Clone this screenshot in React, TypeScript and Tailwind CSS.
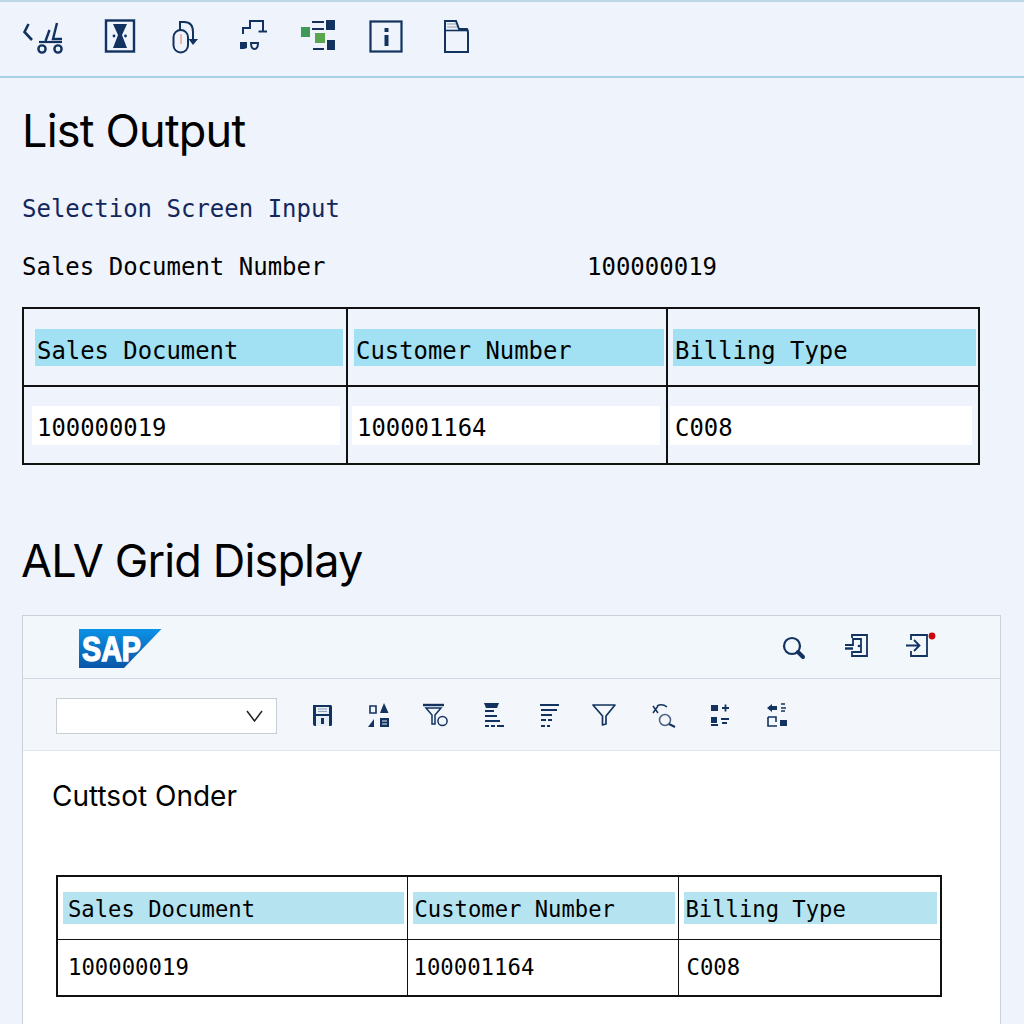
import React from "react";

const N = "#12325f";

function Ico({ x, y, w, h, className, children }: { x: number; y: number; w: number; h: number; className?: string; children: React.ReactNode }) {
  return (
    <svg viewBox={`${x} ${y} ${w} ${h}`} width={w} height={h} className={`shrink-0 ${className ?? ""}`} fill="none" stroke={N} strokeWidth={2}>
      {children}
    </svg>
  );
}

const mono = "font-['DejaVu_Sans_Mono',monospace]";
const inter = "font-['Inter',sans-serif]";

function TopIcons() {
  return (
    <div className="flex items-center h-[74px] pl-[20px]">
      <Ico x={20} y={17} w={46} h={44}>
        <path d="M28.5 24 L24.5 32 L32 40" strokeWidth={2.6} />
        <path d="M49.5 30 L45.5 41" strokeWidth={2.4} />
        <path d="M57 23 L53 39 H62" strokeWidth={2.4} />
        <path d="M39 42 H62" strokeWidth={2.2} />
        <circle cx={42} cy={49} r={3.6} strokeWidth={2.4} />
        <circle cx={58} cy={49} r={3.6} strokeWidth={2.4} />
      </Ico>
      <Ico x={104} y={17} w={32} h={44} className="ml-[38px]">
        <rect x={106} y={20.5} width={28} height={31} strokeWidth={2.4} />
        <path d="M113 24 H127 L122 35 L127 48 H113 L118 35 Z" fill={N} stroke="none" />
        <circle cx={114} cy={36} r={1.4} fill={N} stroke="none" />
        <circle cx={125.5} cy={36} r={1.4} fill={N} stroke="none" />
      </Ico>
      <Ico x={172} y={17} w={30} h={44} className="ml-[36px]">
        <rect x={173.5} y={30} width={14.5} height={22.5} rx={7.2} strokeWidth={2} />
        <path d="M181 34 V44" stroke="#d9967f" strokeWidth={1.2} />
        <path d="M180 30 V22 H184 Q193 22 193 32 V40" strokeWidth={2} />
        <path d="M188.5 39 H198 L193 45 Z" fill={N} stroke="none" />
      </Ico>
      <Ico x={238} y={17} w={30} h={44} className="ml-[36px]">
        <path d="M243 34 V28 H250 V21 H263 V32" strokeWidth={2} />
        <path d="M258.5 31.5 H267" strokeWidth={2} />
        <path d="M240 42 H247 V48 L244 49 H240 Z" fill={N} stroke="none" />
        <path d="M251 43 H258 Q258 49 254.5 49 Q251 49 251 43 Z" strokeWidth={2} />
      </Ico>
      <Ico x={300} y={17} w={36} h={44} className="ml-[32px]">
        <rect x={301} y={27} width={9} height={10} fill="#3f9a58" stroke="none" />
        <rect x={315} y={33} width={10} height={10} fill="#5aa64f" stroke="none" />
        <path d="M312 22 H324 M312 29 H324 M313 49 H324" stroke="#16305c" strokeWidth={1.8} />
        <rect x={326} y={20} width={9} height={10} fill={N} stroke="none" />
        <rect x={327} y={40} width={8} height={10} fill={N} stroke="none" />
      </Ico>
      <Ico x={369} y={17} w={34} h={44} className="ml-[33px]">
        <rect x={370.5} y={21.5} width={31} height={30} strokeWidth={2.2} />
        <rect x={384.5} y={35} width={4} height={11} fill={N} stroke="none" />
        <rect x={384.5} y={28} width={4} height={4} fill={N} stroke="none" />
      </Ico>
      <Ico x={443} y={17} w={27} h={44} className="ml-[40px]">
        <path d="M445 31 V21 H456 L459 29 H467 Q468 30 468 33 V52 H445 Z" strokeWidth={2} />
        <path d="M445 30.5 H467" strokeWidth={1.6} />
        <path d="M447 24 H456 M447 27 H457" stroke="#8b97a8" strokeWidth={1.2} />
      </Ico>
    </div>
  );
}

function OutputTable() {
  return (
    <table className={`ml-[22px] mt-[26px] w-[958px] table-fixed border-collapse border-2 border-[#111] text-[23.9px] text-black ${mono}`}>
      <colgroup>
        <col className="w-[324px]" />
        <col className="w-[320px]" />
        <col />
      </colgroup>
      <tbody>
        <tr className="h-[78px]">
          <td className="border-2 border-[#111] p-0 pl-[11px] pr-[3px]"><div className="bg-[#a2e0f3] h-[37px] mt-[1px] leading-[45px] pl-[2px]">Sales Document</div></td>
          <td className="border-2 border-[#111] p-0 pl-[6px] pr-[2px]"><div className="bg-[#a2e0f3] h-[37px] mt-[1px] leading-[45px] pl-[2px]">Customer Number</div></td>
          <td className="border-2 border-[#111] p-0 pl-[5px] pr-[2px]"><div className="bg-[#a2e0f3] h-[37px] mt-[1px] leading-[45px] pl-[2px]">Billing Type</div></td>
        </tr>
        <tr className="h-[78px]">
          <td className="border-2 border-[#111] p-0 pl-[8px] pr-[6px]"><div className="bg-white h-[39px] leading-[44px] pl-[5px]">100000019</div></td>
          <td className="border-2 border-[#111] p-0 pl-[4px] pr-[6px]"><div className="bg-white h-[39px] leading-[44px] pl-[5px]">100001164</div></td>
          <td className="border-2 border-[#111] p-0 pl-[2px] pr-[6px]"><div className="bg-white h-[39px] leading-[44px] pl-[5px]">C008</div></td>
        </tr>
      </tbody>
    </table>
  );
}

function AlvHeader() {
  return (
    <div className="flex items-center h-[63px] bg-[#f2f7fc] border-b border-[#cfd9e6] pl-[56px]">
      <svg viewBox="79 629 83 40" width={83} height={40} className="shrink-0 mt-[4px]">
        <defs>
          <linearGradient id="sapg" x1="0" y1="0" x2="0" y2="1">
            <stop offset="0" stopColor="#0c92e6" />
            <stop offset="1" stopColor="#0a56a8" />
          </linearGradient>
        </defs>
        <polygon points="79,629 161.5,629 124,668 79,668" fill="url(#sapg)" />
        <text x={82} y={661} fontFamily="Liberation Sans, sans-serif" fontWeight={700} fontSize={35} fill="#fff" stroke="#fff" strokeWidth={1.4} textLength={59} lengthAdjust="spacingAndGlyphs">SAP</text>
      </svg>
      <Ico x={780} y={633} w={26} h={28} className="ml-[619px]">
        <circle cx={791} cy={646} r={8} strokeWidth={2.2} />
        <path d="M797 652 L802 657" strokeWidth={4} strokeLinecap="round" />
      </Ico>
      <Ico x={843} y={632} w={26} h={30} className="ml-[37px]">
        <path d="M851 638 V635 H866 V656 H851 V651" strokeWidth={1.8} />
        <path d="M844 645 H852 V639 H860 V652 H852" strokeWidth={1.8} />
        <path d="M844 648.5 H852" strokeWidth={2.4} />
        <circle cx={858} cy={646} r={1.3} fill={N} stroke="none" />
      </Ico>
      <Ico x={904} y={630} w={34} h={34} className="ml-[35px]">
        <path d="M910 640 V635 H926 V656 H910 V651" strokeWidth={1.8} />
        <path d="M905 645.5 H918 M913 640 L918.5 645.5 L913 651" strokeWidth={1.8} />
        <circle cx={931} cy={636} r={3.4} fill="#c8090f" stroke="none" />
      </Ico>
    </div>
  );
}

function AlvToolbar() {
  return (
    <div className="flex items-center h-[72px] bg-[#f3f7fb] border-b border-[#dfe6ee] pl-[33px]">
      <div className="flex items-center justify-end w-[221px] h-[36px] mt-[2px] bg-white border border-[#c8ced4] pr-[13px]">
        <svg viewBox="0 0 17 12" width={17} height={12} fill="none" stroke="#222" strokeWidth={1.5}><path d="M1 1 L8.5 11 L16 1" /></svg>
      </div>
      <Ico x={311} y={700} w={23} h={29} className="ml-[34px]">
        <path d="M313 705 H331 Q332 705 332 707 V725 Q332 726 330 726 H315 Q313 726 313 724 Z" fill={N} stroke="none" />
        <rect x={316} y={707} width={13} height={7} fill="#e8eef5" stroke="none" />
        <rect x={316} y={716} width={13} height={10} fill="#e8eef5" stroke="none" />
        <rect x={321} y={718} width={3} height={6} fill={N} stroke="none" />
        <path d="M318 709 H327 M318 711.5 H327" stroke="#8ca0b8" strokeWidth={1} />
      </Ico>
      <Ico x={367} y={700} w={24} h={29} className="ml-[33px]">
        <path d="M370 706 H376 V713 H370 Z" strokeWidth={1.6} />
        <path d="M384 703 L388.5 713 H380 Z" fill={N} stroke="none" />
        <path d="M368 727 L374 719 V727 Z" fill={N} stroke="none" />
        <rect x={380} y={718} width={9} height={9} fill={N} stroke="none" />
        <path d="M382 721 H387 M382 724 H387" stroke="#e8eef5" strokeWidth={1.2} />
      </Ico>
      <Ico x={422} y={700} w={28} h={29} className="ml-[31px]">
        <path d="M423 705 H444" strokeWidth={2.4} />
        <path d="M426 708 H441 L435 715 V724 H432 V715 Z" strokeWidth={1.5} />
        <circle cx={442.5} cy={721} r={4.6} strokeWidth={1.5} />
      </Ico>
      <Ico x={482} y={700} w={23} h={29} className="ml-[32px]">
        <path d="M484 703 H499 L497 708 H486 Z" fill={N} stroke="none" />
        <path d="M485 711 H494 M485 716 H497 M485 721 H500 M485 726 H489 M491 726 H495 M497 726 H504" strokeWidth={2.2} />
      </Ico>
      <Ico x={539} y={700} w={21} h={29} className="ml-[34px]">
        <path d="M540 705 H559 M541 710 H557 M541 715 H552 M541 720 H546 M548 720 H552 M541 726 H545 M547 726 H550" strokeWidth={2} />
      </Ico>
      <Ico x={591} y={700} w={27} h={29} className="ml-[31px]">
        <path d="M593 705 H615 L606 716 V724 L602.5 725 V716 Z" strokeWidth={1.7} strokeLinejoin="round" />
      </Ico>
      <Ico x={651} y={700} w={26} h={29} className="ml-[33px]">
        <path d="M653 706 L658 713 M658 706 L653 713 M657 706 Q662 703 667 707" strokeWidth={1.5} />
        <circle cx={665} cy={720} r={5.5} stroke="#4a6180" strokeWidth={1.5} />
        <path d="M669 724 L675 727" strokeWidth={2} />
      </Ico>
      <Ico x={710} y={700} w={21} h={29} className="ml-[33px]">
        <rect x={711} y={705} width={7} height={6} fill={N} stroke="none" />
        <path d="M722 708 H729 M725.5 704.5 V711.5" strokeWidth={1.8} />
        <rect x={711} y={717} width={6} height={6} fill={N} stroke="none" />
        <path d="M711 725 H718 M721 719 H729 M722 723 H727" strokeWidth={1.8} />
      </Ico>
      <Ico x={766} y={700} w={22} h={29} className="ml-[35px]">
        <path d="M767 708 L772 704 V706 H777 V710 H772 V712 Z" fill={N} stroke="none" />
        <path d="M781 704 H785 M781 708 H786 M781 711 H785" strokeWidth={1.6} />
        <path d="M768 717 V726 H777 M768 717 H776 V722" strokeWidth={1.6} />
        <rect x={780} y={720} width={7} height={6} fill={N} stroke="none" />
      </Ico>
    </div>
  );
}

function GridTable() {
  return (
    <table className={`ml-[33px] mt-[62px] w-[886px] table-fixed border-collapse border-2 border-[#111] text-[22.2px] text-black ${mono}`}>
      <colgroup>
        <col className="w-[350px]" />
        <col className="w-[271px]" />
        <col />
      </colgroup>
      <tbody>
        <tr className="h-[63px]">
          <td className="border-[1.5px] border-[#111] p-0 pl-[5px] pr-[3px]"><div className="bg-[#b5e4f0] h-[32px] leading-[35px] pl-[5px]">Sales Document</div></td>
          <td className="border-[1.5px] border-[#111] p-0 pl-[5px] pr-[3px]"><div className="bg-[#b5e4f0] h-[32px] leading-[35px] pl-[2px]">Customer Number</div></td>
          <td className="border-[1.5px] border-[#111] p-0 pl-[5px] pr-[3px]"><div className="bg-[#b5e4f0] h-[32px] leading-[35px] pl-[2px]">Billing Type</div></td>
        </tr>
        <tr className="h-[57px] text-[22.3px]">
          <td className="border-[1.5px] border-[#111] p-0 pl-[10px]">100000019</td>
          <td className="border-[1.5px] border-[#111] p-0 pl-[6px]">100001164</td>
          <td className="border-[1.5px] border-[#111] p-0 pl-[8px]">C008</td>
        </tr>
      </tbody>
    </table>
  );
}

export default function App() {
  return (
    <div className="w-[1024px] h-[1024px] overflow-hidden bg-[#eff3fb]">
      <div className="h-[2px] bg-[#bcd8e8]" />
      <TopIcons />
      <div className="h-[2px] bg-[#a9d0e0]" />
      <h1 className={`ml-[22px] mt-[25px] text-[45px] tracking-[-0.8px] leading-[56px] font-normal text-black ${inter}`}>List Output</h1>
      <div className={`ml-[22px] mt-[36px] text-[24px] leading-[28px] text-[#14275c] ${mono}`}>Selection Screen Input</div>
      <div className={`ml-[22px] mt-[30px] flex text-[24px] leading-[28px] text-black ${mono}`}>
        <span className="w-[565px]">Sales Document Number</span>
        <span>100000019</span>
      </div>
      <OutputTable />
      <h2 className={`ml-[21px] mt-[68px] text-[45px] tracking-[-0.85px] leading-[56px] font-normal text-black ${inter}`}>ALV Grid Display</h2>
      <div className="ml-[22px] mt-[26px] w-[979px] h-[420px] bg-white border border-[#c9d1d9]">
        <AlvHeader />
        <AlvToolbar />
        <div className={`ml-[29px] mt-[28px] text-[28px] leading-[34px] text-black ${inter}`}>Cuttsot Onder</div>
        <GridTable />
      </div>
    </div>
  );
}
